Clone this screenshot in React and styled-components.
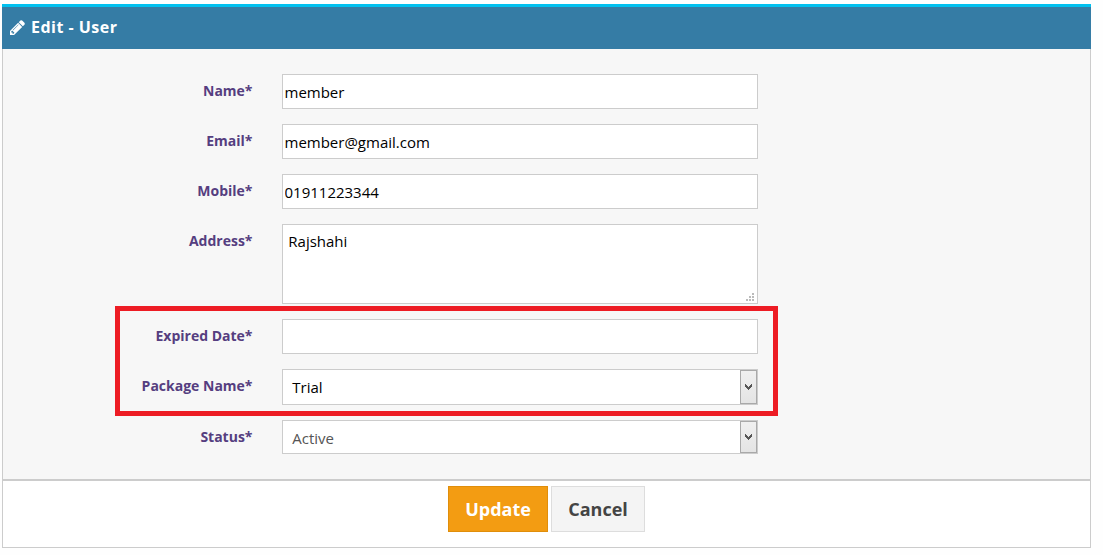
import React from "react";
import styled, { createGlobalStyle } from "styled-components";

const GlobalStyle = createGlobalStyle`
  *, *::before, *::after { box-sizing: border-box; }
  body {
    margin: 0;
    background: #fefefe;
    font-family: "Open Sans", "Noto Sans", sans-serif;
  }
`;

const Panel = styled.main`
  width: 1089px;
  height: 544px;
  margin: 4px 0 0 2px;
  display: flex;
  flex-direction: column;
`;

const Header = styled.header`
  height: 45px;
  flex: none;
  display: flex;
  align-items: center;
  padding: 0 8px 2px;
  gap: 6px;
  background: #357ca5;
  border-top: 3px solid #00c0ef;
  color: #fff;
`;

const Title = styled.h1`
  margin: 0;
  font-size: 16px;
  line-height: 22px;
  font-weight: 700;
  letter-spacing: 0.48px;
`;

const Form = styled.form`
  flex: 1;
  display: flex;
  flex-direction: column;
  border: 1px solid #ccc;
  border-top: 0;
`;

const Fields = styled.div`
  height: 432px;
  padding: 25px 0 0 112px;
  display: flex;
  flex-direction: column;
  gap: 15px;
  background: #f7f7f7;
  border-bottom: 2px solid #ccc;
`;

const Highlighted = styled.div`
  position: relative;
  width: 663px;
  display: flex;
  flex-direction: column;
  gap: 15px;

  &::after {
    content: "";
    position: absolute;
    inset: -13px 0 -11px;
    border: 5px solid #ed1c24;
    pointer-events: none;
  }
`;

const Row = styled.div`
  display: grid;
  grid-template-columns: 137.5px 476px;
  column-gap: 29.5px;
  align-items: start;
`;

const Label = styled.label`
  padding-top: 7px;
  text-align: right;
  font-size: 14px;
  line-height: 20px;
  font-weight: 700;
  color: #553e80;
  white-space: nowrap;
`;

const Input = styled.input`
  width: 100%;
  height: 35px;
  margin: 0;
  padding: 2px 1.5px;
  border: 1px solid #ccc;
  border-radius: 0;
  outline: 0;
  background: #fff;
  color: #000;
  font: 15px "Open Sans", sans-serif;
`;

const AreaBox = styled.div`
  position: relative;
  height: 80px;
`;

const TextArea = styled.textarea`
  display: block;
  width: 100%;
  height: 100%;
  margin: 0;
  padding: 6px 5.3px;
  border: 1px solid #ccc;
  outline: 0;
  resize: none;
  background: #fff;
  color: #000;
  font: 15px/21px "Open Sans", sans-serif;
`;

const Grip = styled.svg`
  position: absolute;
  right: 4px;
  bottom: 3px;
`;

const Select = styled.button.attrs({ type: "button" })`
  width: 100%;
  height: ${(p) => p.$height}px;
  padding: 0 0 0 9.3px;
  display: flex;
  align-items: stretch;
  justify-content: space-between;
  border: 1px solid #ccc;
  background: #fff;
  color: ${(p) => p.$color};
  font: 15px/20px "Open Sans", sans-serif;
  text-align: left;
`;

const Value = styled.span`
  align-self: center;
  padding-top: ${(p) => p.$shift}px;
`;

const Arrow = styled.span`
  width: 17px;
  display: flex;
  align-items: center;
  justify-content: center;
  border: 1px solid #a9a9a9;
  background: linear-gradient(#f0f0f0, #e4e4e4);
`;

const Footer = styled.footer`
  flex: 1;
  display: flex;
  justify-content: center;
  align-items: flex-start;
  gap: 3px;
  padding-top: 5px;
  background: #fff;
`;

const Button = styled.button`
  width: ${(p) => p.$width}px;
  height: 46px;
  padding: 0 0 1px;
  border: 1px solid ${(p) => (p.$primary ? "#e08e0b" : "#ddd")};
  background: ${(p) => (p.$primary ? "#f39c12" : "#f4f4f4")};
  color: ${(p) => (p.$primary ? "#fff" : "#444")};
  font: 700 18px/24px "Open Sans", sans-serif;
`;

function PencilIcon() {
  return (
    <svg width="15" height="15" viewBox="0 0 1536 1536" fill="currentColor" aria-hidden="true">
      <path d="M363 1408l91-91-235-235-91 91v107h128v128zM886 480q0-22-22-22-10 0-17 7L305 1007q-7 7-7 17 0 22 22 22 10 0 17-7L879 497q7-7 7-17zM832 288l416 416-832 832H0v-416zM1515 384q0 53-37 90l-166 166L896 224l166-165q36-38 90-38 53 0 91 38l235 234q37 39 37 91z" />
    </svg>
  );
}

function Field({ id, label, children }) {
  return (
    <Row>
      <Label htmlFor={id}>{label}*</Label>
      {children}
    </Row>
  );
}

function SelectField({ id, label, value, height, color, shift }) {
  return (
    <Field id={id} label={label}>
      <Select id={id} $height={height} $color={color}>
        <Value $shift={shift}>{value}</Value>
        <Arrow>
          <svg width="7" height="6" viewBox="0 0 7 6" fill="#555" shapeRendering="crispEdges">
            <path d="M0 0h1v1h1v1h1v1h1v-1h1v-1h1v-1h1v3h-1v1h-1v1h-1v1h-1v-1h-1v-1h-1v-1h-1z" />
          </svg>
        </Arrow>
      </Select>
    </Field>
  );
}

export default function App() {
  return (
    <>
      <GlobalStyle />
      <Panel>
        <Header>
          <PencilIcon />
          <Title>Edit - User</Title>
        </Header>
        <Form onSubmit={(e) => e.preventDefault()}>
          <Fields>
            <Field id="name" label="Name">
              <Input id="name" defaultValue="member" />
            </Field>
            <Field id="email" label="Email">
              <Input id="email" defaultValue="member@gmail.com" />
            </Field>
            <Field id="mobile" label="Mobile">
              <Input id="mobile" defaultValue="01911223344" />
            </Field>
            <Field id="address" label="Address">
              <AreaBox>
                <TextArea id="address" defaultValue="Rajshahi" spellCheck={false} />
                <Grip width="8" height="8" viewBox="0 0 8 8" fill="#bbb" shapeRendering="crispEdges">
                  <path d="M6 0h2v2h-2zM3 3h2v2h-2zM6 3h2v2h-2zM0 6h2v2h-2zM3 6h2v2h-2zM6 6h2v2h-2z" />
                </Grip>
              </AreaBox>
            </Field>
            <Highlighted>
              <Field id="expired" label="Expired Date">
                <Input id="expired" />
              </Field>
              <SelectField id="package" label="Package Name" value="Trial" height={36} color="#000" shift={0} />
            </Highlighted>
            <SelectField id="status" label="Status" value="Active" height={34} color="#555" shift={1} />
          </Fields>
          <Footer>
            <Button type="submit" $primary $width={100}>Update</Button>
            <Button type="button" $width={94}>Cancel</Button>
          </Footer>
        </Form>
      </Panel>
    </>
  );
}
